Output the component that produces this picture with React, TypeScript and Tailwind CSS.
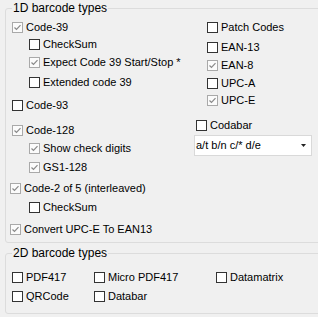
import React from 'react';

const Box = ({ checked }: { checked?: boolean }) =>
  checked ? (
    <svg width="11" height="11" viewBox="0 0 11 11" className="shrink-0">
      <rect x="0.5" y="0.5" width="10" height="10" fill="#fbfbfb" stroke="#a9a9a9" />
      <path d="M2.5 5.5 L4.5 7.5 L8.5 3.2" fill="none" stroke="#8a8a8a" strokeWidth="1.2" />
    </svg>
  ) : (
    <svg width="11" height="11" viewBox="0 0 11 11" className="shrink-0">
      <rect x="0.5" y="0.5" width="10" height="10" fill="#ffffff" stroke="#333333" />
    </svg>
  );

const Check = ({ label, checked, className = '' }: { label: string; checked?: boolean; className?: string }) => (
  <div className={`flex h-[13px] items-center gap-[3px] whitespace-nowrap ${className}`}>
    <Box checked={checked} />
    <span className="leading-[13px]">{label}</span>
  </div>
);

export default function App() {
  return (
    <div
      className="h-[317px] w-[318px] overflow-hidden bg-[#f0f0f0] pl-[5px] text-[11px] text-black"
      style={{ fontFamily: '"Liberation Sans", Arial, sans-serif' }}
    >
      {/* 1D group */}
      <fieldset className="mt-[1px] h-[242px] w-[320px] rounded-[3px] border border-[#dcdcdc]">
        <legend className="ml-[6px] px-[1px] text-[12px] leading-[14px]">1D barcode types</legend>
        <div className="flex">
          <div className="flex w-[188px] flex-col">
            <Check className="ml-[6px] mt-[6px]" label="Code-39" checked />
            <Check className="ml-[23px] mt-[4px]" label="CheckSum" />
            <Check className="ml-[23px] mt-[5px]" label="Expect Code 39 Start/Stop *" checked />
            <Check className="ml-[23px] mt-[7px]" label="Extended code 39" />
            <Check className="ml-[6px] mt-[10px]" label="Code-93" />
            <Check className="ml-[6px] mt-[12px]" label="Code-128" checked />
            <Check className="ml-[23px] mt-[5px]" label="Show check digits" checked />
            <Check className="ml-[23px] mt-[6px]" label="GS1-128" checked />
            <Check className="ml-[4px] mt-[8px]" label="Code-2 of 5 (interleaved)" checked />
            <Check className="ml-[23px] mt-[6px]" label="CheckSum" />
            <Check className="ml-[4px] mt-[9px]" label="Convert UPC-E To EAN13" checked />
          </div>
          <div className="flex flex-col">
            <Check className="ml-[13px] mt-[6px]" label="Patch Codes" />
            <Check className="ml-[13px] mt-[7px]" label="EAN-13" />
            <Check className="ml-[13px] mt-[5px]" label="EAN-8" checked />
            <Check className="ml-[13px] mt-[5px]" label="UPC-A" />
            <Check className="ml-[13px] mt-[4px]" label="UPC-E" checked />
            <Check className="ml-[2px] mt-[12px]" label="Codabar" />
            <div className="mt-[3px] flex h-[21px] w-[118px] items-center justify-between border border-[#d9d9d9] bg-white pl-[1px] pr-[5px]">
              <span>a/t b/n c/* d/e</span>
              <svg width="5" height="3" viewBox="0 0 5 3">
                <path d="M0 0 H5 L2.5 3 Z" fill="#222" />
              </svg>
            </div>
          </div>
        </div>
      </fieldset>

      {/* 2D group */}
      <fieldset className="mt-[3px] h-[68px] w-[320px] rounded-[3px] border border-[#dcdcdc]">
        <legend className="ml-[6px] px-[1px] text-[12px] leading-[14px]">2D barcode types</legend>
        <div className="mt-[11px] flex pl-[6px]">
          <Check className="w-[82px]" label="PDF417" />
          <Check className="w-[122px]" label="Micro PDF417" />
          <Check label="Datamatrix" />
        </div>
        <div className="mt-[6px] flex pl-[6px]">
          <Check className="w-[82px]" label="QRCode" />
          <Check label="Databar" />
        </div>
      </fieldset>
    </div>
  );
}
